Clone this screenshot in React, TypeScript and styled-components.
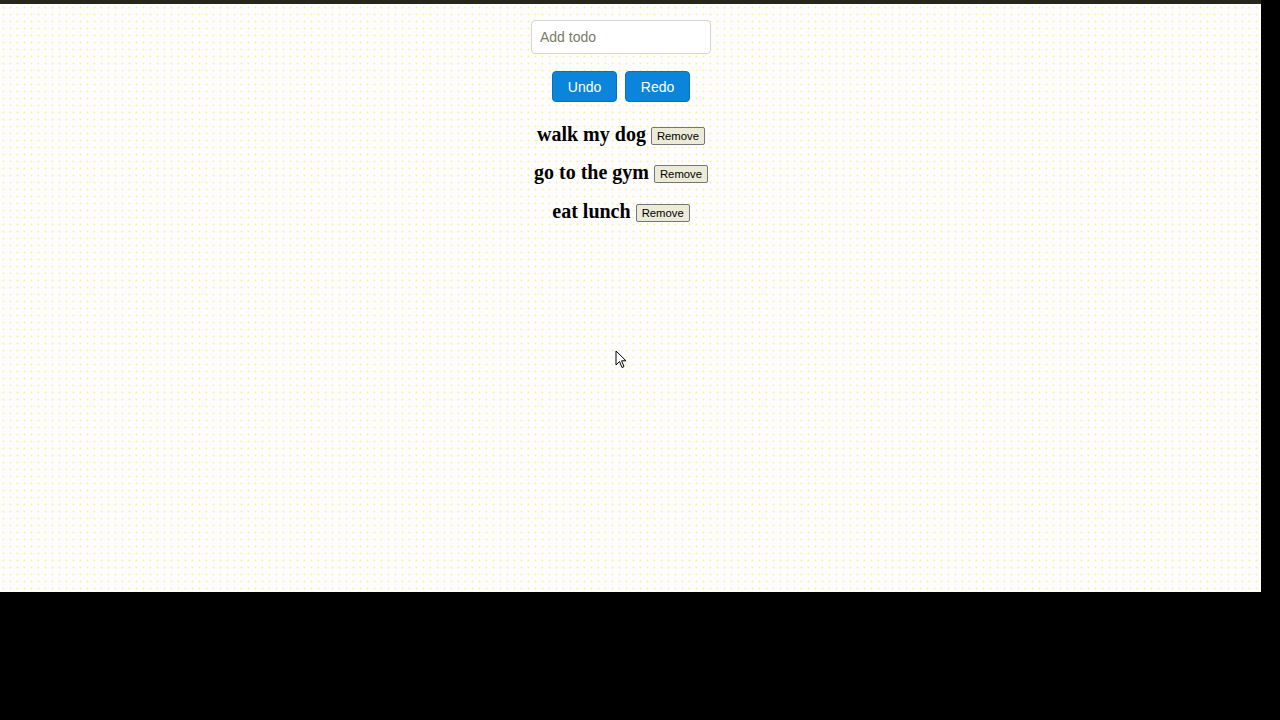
import { useState } from 'react';
import styled, { createGlobalStyle } from 'styled-components';

const GlobalStyle = createGlobalStyle`
  html, body {
    margin: 0;
    padding: 0;
    background: #000;
  }
  #root {
    width: 1280px;
    height: 720px;
  }
`;

const initialTodos = ['walk my dog', 'go to the gym', 'eat lunch'];

export default function App() {
  const [todos, setTodos] = useState<string[]>(initialTodos);
  const [draft, setDraft] = useState('');

  const removeAt = (index: number) => {
    setTodos((prev) => prev.filter((_, i) => i !== index));
  };

  return (
    <>
      <GlobalStyle />
      <Screen>
        <Page>
          <Content>
            <TodoInput
              placeholder="Add todo"
              value={draft}
              onChange={(e) => setDraft(e.target.value)}
              onKeyDown={(e) => {
                if (e.key === 'Enter' && draft.trim()) {
                  setTodos((prev) => [...prev, draft.trim()]);
                  setDraft('');
                }
              }}
            />
            <ButtonRow>
              <ActionButton type="button">Undo</ActionButton>
              <ActionButton type="button">Redo</ActionButton>
            </ButtonRow>
            <TodoList>
              {todos.map((todo, i) => (
                <TodoRow key={todo}>
                  <TodoText>{todo}</TodoText>
                  <RemoveButton type="button" onClick={() => removeAt(i)}>
                    Remove
                  </RemoveButton>
                </TodoRow>
              ))}
            </TodoList>
          </Content>
          <Cursor width="12" height="19" viewBox="0 0 12 19" aria-hidden>
            <path
              d="M1 1 L1 15 L4.5 11.5 L7 17.5 L9 16.6 L6.6 10.8 L11 10.8 Z"
              fill="#fff"
              stroke="#000"
              strokeWidth="1"
              strokeLinejoin="round"
            />
          </Cursor>
        </Page>
      </Screen>
    </>
  );
}

const Screen = styled.div`
  width: 1280px;
  height: 720px;
  background: #000;
  display: flex;
  align-items: flex-start;
`;

const Page = styled.div`
  position: relative;
  width: 1261px;
  height: 592px;
  box-sizing: border-box;
  border-top: 4px solid #26261a;
  background-color: #fdfdff;
  background-image: radial-gradient(circle, #f7f29a 0.8px, transparent 1.2px);
  background-size: 7px 7px;
`;

const Content = styled.div`
  width: 1242px;
  display: flex;
  flex-direction: column;
  align-items: center;
  padding-top: 16px;
`;

const TodoInput = styled.input`
  width: 180px;
  height: 34px;
  box-sizing: border-box;
  padding: 0 8px;
  border: 1px solid #d6d6c8;
  border-radius: 4px;
  background: #fff;
  font-family: 'Liberation Sans', Arial, sans-serif;
  font-size: 14px;
  color: #333;
  outline: none;

  &::placeholder {
    color: #7a7a6a;
  }
`;

const ButtonRow = styled.div`
  display: flex;
  gap: 8px;
  margin-top: 17px;
`;

const ActionButton = styled.button`
  width: 65px;
  height: 31px;
  box-sizing: border-box;
  border: 1px solid #0a6fc0;
  border-radius: 4px;
  background: #0b85dc;
  color: #fff;
  font-family: 'Liberation Sans', Arial, sans-serif;
  font-size: 14px;
  cursor: pointer;
`;

const TodoList = styled.div`
  display: flex;
  flex-direction: column;
  align-items: center;
  gap: 15.5px;
  margin-top: 20.5px;
`;

const TodoRow = styled.div`
  display: flex;
  align-items: center;
  gap: 5px;
  height: 23px;
`;

const TodoText = styled.span`
  font-family: 'Liberation Serif', 'Times New Roman', serif;
  font-weight: bold;
  font-size: 20px;
  line-height: 23px;
  color: #000;
`;

const RemoveButton = styled.button`
  height: 18px;
  box-sizing: border-box;
  padding: 0 5px;
  margin-top: 3px;
  border: 1px solid #767676;
  border-radius: 2px;
  background: #ebebd8;
  color: #000;
  font-family: 'Liberation Sans', Arial, sans-serif;
  font-size: 11.3px;
  line-height: 16px;
  cursor: pointer;
`;

const Cursor = styled.svg`
  position: absolute;
  left: 615px;
  top: 346px;
  pointer-events: none;
`;
